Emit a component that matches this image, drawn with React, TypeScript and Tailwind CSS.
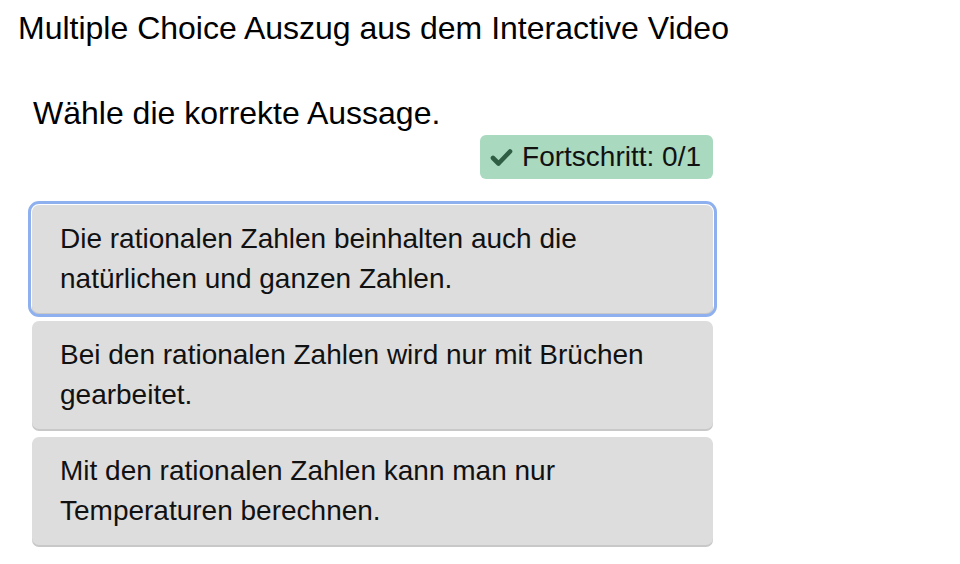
import React from "react";

const options = [
  "Die rationalen Zahlen beinhalten auch die natürlichen und ganzen Zahlen.",
  "Bei den rationalen Zahlen wird nur mit Brüchen gearbeitet.",
  "Mit den rationalen Zahlen kann man nur Temperaturen berechnen.",
];

export default function App() {
  return (
    <div
      className="w-[960px] h-[564px] bg-white text-black overflow-hidden"
      style={{ fontFamily: '"Liberation Sans", Arial, sans-serif' }}
    >
      <h1 className="pl-[18px] pt-[9px] text-[32px] leading-[38px] font-normal">
        Multiple Choice Auszug aus dem Interactive Video
      </h1>
      <div className="pl-[32px] pt-[47px] w-[681px] box-content">
        <div className="pl-[1px] text-[32px] leading-[38px]">Wähle die korrekte Aussage.</div>
        <div className="flex justify-end mt-[3px]">
          <div className="flex items-center gap-[9px] bg-[#a9d9bf] rounded-[6px] h-[44px] pl-[10px] pr-[12px] text-[28px] text-[#111]">
            <svg width="23" height="19" viewBox="0 0 23 19">
              <path d="M3 10 L8.5 15.5 L20 3.5" fill="none" stroke="#2f5e44" strokeWidth="4.6" strokeLinecap="round" strokeLinejoin="round" />
            </svg>
            <span>Fortschritt: 0/1</span>
          </div>
        </div>
        <div className="flex flex-col gap-[8px] mt-[26px]">
          {options.map((t, i) => (
            <div
              key={i}
              className={
                "bg-[#dddddd] rounded-[7px] shadow-[0_2px_0_#c8c8c8] pl-[28px] pr-[40px] py-[14px] text-[28px] leading-[40px] text-[#111] " +
                (i === 0 ? "outline-[3px] outline outline-[#8fb0ef] outline-offset-[1px]" : "")
              }
            >
              {t}
            </div>
          ))}
        </div>
      </div>
    </div>
  );
}
